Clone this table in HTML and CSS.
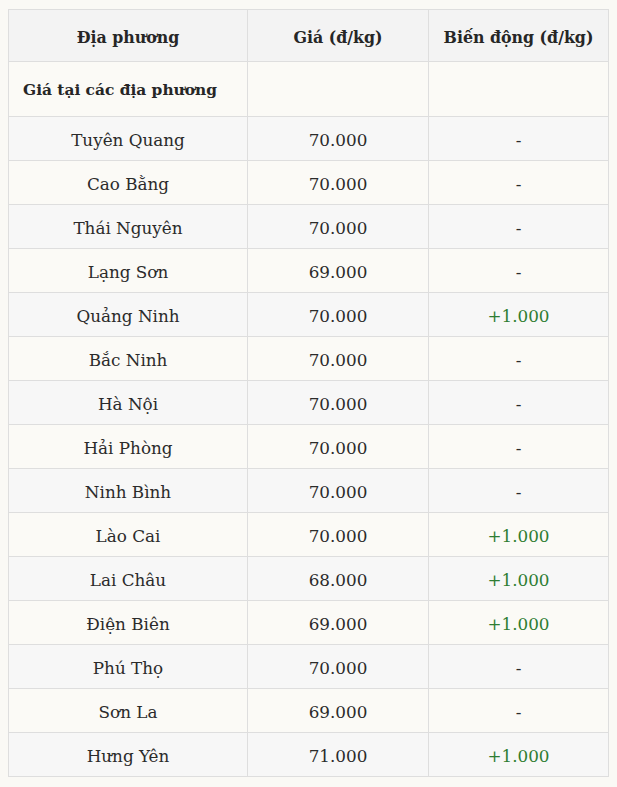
FILE: index.html
```html
<!DOCTYPE html>
<html lang="vi">
<head>
<meta charset="utf-8">
<title>Giá tại các địa phương</title>
<link rel="stylesheet" href="styles.css">
</head>
<body>
<table class="price-table">
  <colgroup>
    <col class="col-place">
    <col class="col-price">
    <col class="col-change">
  </colgroup>
  <thead>
    <tr><th>Địa phương</th><th>Giá (đ/kg)</th><th>Biến động (đ/kg)</th></tr>
  </thead>
  <tbody>
    <tr class="section"><td class="section-title">Giá tại các địa phương</td><td></td><td></td></tr>
    <tr><td>Tuyên Quang</td><td>70.000</td><td>-</td></tr>
    <tr><td>Cao Bằng</td><td>70.000</td><td>-</td></tr>
    <tr><td>Thái Nguyên</td><td>70.000</td><td>-</td></tr>
    <tr><td>Lạng Sơn</td><td>69.000</td><td>-</td></tr>
    <tr><td>Quảng Ninh</td><td>70.000</td><td class="up">+1.000</td></tr>
    <tr><td>Bắc Ninh</td><td>70.000</td><td>-</td></tr>
    <tr><td>Hà Nội</td><td>70.000</td><td>-</td></tr>
    <tr><td>Hải Phòng</td><td>70.000</td><td>-</td></tr>
    <tr><td>Ninh Bình</td><td>70.000</td><td>-</td></tr>
    <tr><td>Lào Cai</td><td>70.000</td><td class="up">+1.000</td></tr>
    <tr><td>Lai Châu</td><td>68.000</td><td class="up">+1.000</td></tr>
    <tr><td>Điện Biên</td><td>69.000</td><td class="up">+1.000</td></tr>
    <tr><td>Phú Thọ</td><td>70.000</td><td>-</td></tr>
    <tr><td>Sơn La</td><td>69.000</td><td>-</td></tr>
    <tr><td>Hưng Yên</td><td>71.000</td><td class="up">+1.000</td></tr>
  </tbody>
</table>
</body>
</html>
```

FILE: styles.css
```css
html, body {
  background: #faf9f5;
}
body {
  margin: 9px 8px;
  font-family: "DejaVu Serif", "Liberation Serif", serif;
  color: #2b2b2b;
}
.price-table {
  width: 600px;
  border-collapse: collapse;
  table-layout: fixed;
  font-size: 16.8px;
}
.col-place { width: 239px; }
.col-price { width: 181px; }
.col-change { width: 180px; }
.price-table th,
.price-table td {
  border: 1px solid #dedede;
  text-align: center;
  padding: 2px 8px 0;
  height: 41px;
  box-sizing: content-box;
}
.price-table th {
  height: 48px;
  padding-top: 3px;
  background: #f3f3f3;
  font-weight: bold;
  font-size: 15.8px;
  color: #262626;
}
.price-table tbody tr {
  background: #fbfaf6;
}
.price-table tbody tr:nth-child(even) {
  background: #f7f7f7;
}
.price-table .section td {
  height: 52px;
}
.price-table .section-title {
  text-align: left;
  padding-left: 14px;
  font-weight: bold;
  font-size: 15.4px;
  color: #262626;
}
.price-table .up {
  color: #2e7d32;
}
```
